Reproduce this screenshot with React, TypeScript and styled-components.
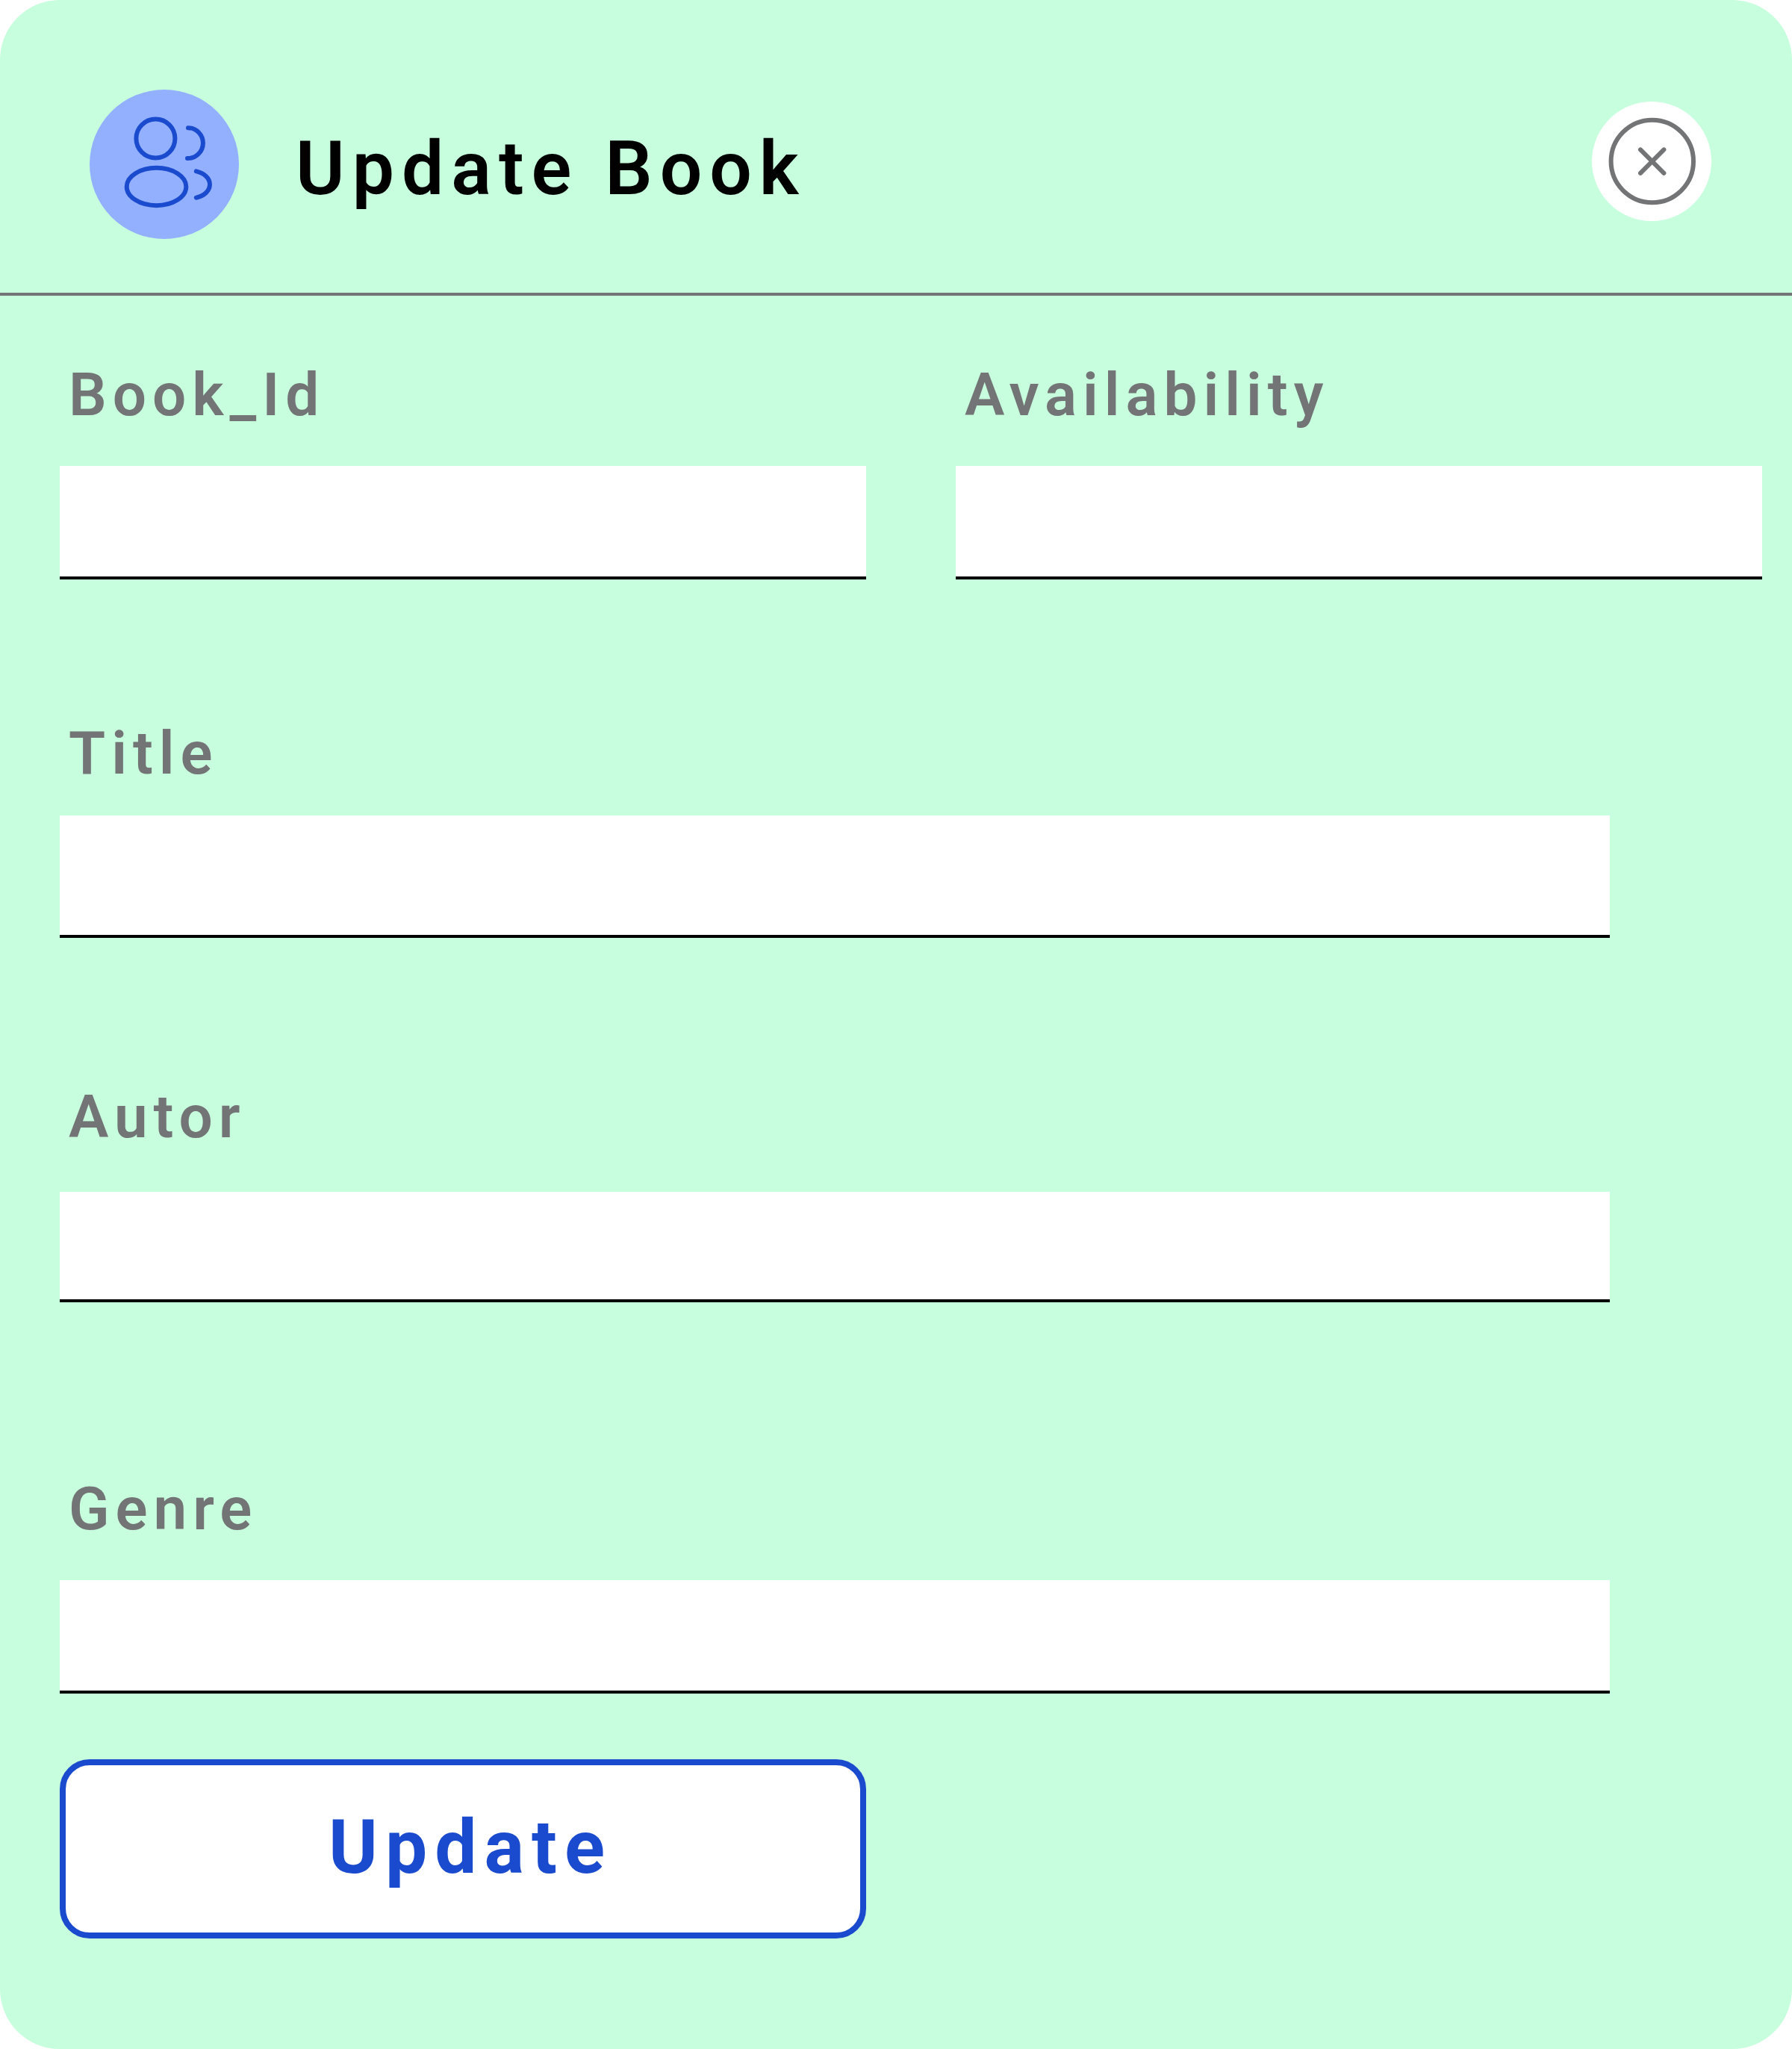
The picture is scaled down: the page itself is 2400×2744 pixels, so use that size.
import React from 'react';
import styled, { createGlobalStyle } from 'styled-components';

const GlobalStyle = createGlobalStyle`
  *, *::before, *::after { box-sizing: border-box; }
  body { margin: 0; background: #ffffff; font-family: Roboto, "Liberation Sans", sans-serif; }
`;

const Dialog = styled.main`
  display: flex;
  flex-direction: column;
  width: 2400px;
  height: 2744px;
  border-radius: 80px;
  background: #c7ffde;
  overflow: hidden;
`;

const Header = styled.header`
  display: flex;
  align-items: flex-start;
  height: 396px;
  padding: 120px 108px 0 120px;
  border-bottom: 4px solid #737476;
`;

const Avatar = styled.div`
  width: 200px;
  height: 200px;
  border-radius: 50%;
  background: #93afff;
`;

const Heading = styled.h1`
  margin: 47px auto 0 76px;
  font-size: 100px;
  line-height: 117px;
  font-weight: 600;
  letter-spacing: 10px;
  color: #000000;
  white-space: nowrap;
`;

const CloseButton = styled.button`
  width: 160px;
  height: 160px;
  margin-top: 16px;
  padding: 0;
  border: 0;
  border-radius: 50%;
  background: #ffffff;
`;

const Icon = styled.svg`
  display: block;
  width: 100%;
  height: 100%;
  fill: none;
  stroke-width: 6;
  stroke-linecap: round;
`;

const Form = styled.form`
  display: flex;
  flex-direction: column;
  padding: 0 40px 0 80px;
`;

const FieldRow = styled.div`
  display: grid;
  grid-template-columns: 1080px 1080px;
  column-gap: 120px;
`;

const Field = styled.div<{ $top: number; $gap: number }>`
  display: flex;
  flex-direction: column;
  gap: ${(p) => p.$gap}px;
  padding-top: ${(p) => p.$top}px;
`;

const Label = styled.label`
  padding-left: 12px;
  font-size: 80px;
  line-height: 94px;
  font-weight: 600;
  letter-spacing: 8px;
  color: #737476;
  white-space: nowrap;
`;

const Input = styled.input<{ $width: number; $height: number }>`
  width: ${(p) => p.$width}px;
  height: ${(p) => p.$height}px;
  padding: 0 24px;
  border: 0;
  border-bottom: 4px solid #000000;
  border-radius: 0;
  outline: 0;
  background: #ffffff;
  font: 500 64px Roboto, sans-serif;
`;

const SubmitButton = styled.button`
  width: 1080px;
  height: 240px;
  margin-top: 88px;
  padding: 0 0 5px 20px;
  border: 8px solid #1a4bce;
  border-radius: 40px;
  background: #ffffff;
  color: #1a4bce;
  font-family: Roboto, "Liberation Sans", sans-serif;
  font-size: 100px;
  line-height: 117px;
  font-weight: 700;
  letter-spacing: 10px;
`;

const UsersIcon = () => (
  <Icon viewBox="0 0 200 200" stroke="#1a4bce">
    <circle cx="88.4" cy="65.4" r="26" />
    <ellipse cx="89.5" cy="130" rx="39.8" ry="25.2" />
    <path d="M132 51.2A20.4 20.4 0 0 1 131 92" />
    <path d="M142.8 109.4C153.2 111.6 161 118.6 161 127C161 135.5 153.2 142.6 142.8 144.7" />
  </Icon>
);

const CloseIcon = () => (
  <Icon viewBox="0 0 160 160" stroke="#737476">
    <circle cx="80.8" cy="80" r="55.2" />
    <path d="M65 64.4L96.4 95.8M96.4 64.4L65 95.8" />
  </Icon>
);

interface TextFieldProps {
  id: string;
  label: string;
  top: number;
  gap: number;
  width: number;
  height: number;
}

const TextField = ({ id, label, top, gap, width, height }: TextFieldProps) => (
  <Field $top={top} $gap={gap}>
    <Label htmlFor={id}>{label}</Label>
    <Input id={id} $width={width} $height={height} />
  </Field>
);

export default function App() {
  return (
    <>
      <GlobalStyle />
      <Dialog>
        <Header>
          <Avatar>
            <UsersIcon />
          </Avatar>
          <Heading>Update Book</Heading>
          <CloseButton type="button" aria-label="Close">
            <CloseIcon />
          </CloseButton>
        </Header>
        <Form>
          <FieldRow>
            <TextField id="book-id" label="Book_Id" top={86} gap={48} width={1080} height={152} />
            <TextField id="availability" label="Availability" top={86} gap={48} width={1080} height={152} />
          </FieldRow>
          <TextField id="title" label="Title" top={186} gap={36} width={2076} height={164} />
          <TextField id="author" label="Autor" top={193} gap={53} width={2076} height={148} />
          <TextField id="genre" label="Genre" top={230} gap={48} width={2076} height={152} />
          <SubmitButton type="button">Update</SubmitButton>
        </Form>
      </Dialog>
    </>
  );
}
